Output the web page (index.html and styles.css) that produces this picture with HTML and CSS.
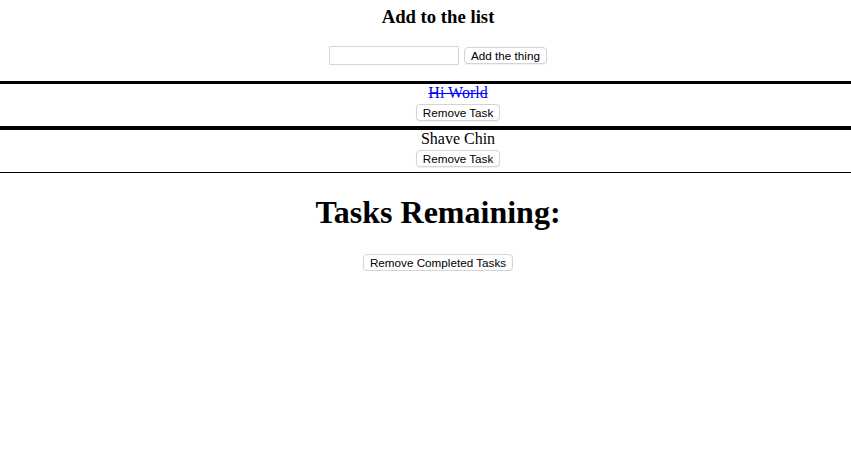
FILE: index.html
```html
<!DOCTYPE html>
<html>
<head>
<meta charset="utf-8">
<title>Todo</title>
<link rel="stylesheet" href="styles.css">
</head>
<body>
<div class="page">
  <h3 class="title">Add to the list</h3>
  <form class="add-form">
    <input class="add-input" type="text">
    <button class="btn" type="button">Add the thing</button>
  </form>
  <ul class="tasks">
    <li class="task">
      <div class="task-text done">Hi World</div>
      <button class="btn" type="button">Remove Task</button>
    </li>
    <li class="task">
      <div class="task-text">Shave Chin</div>
      <button class="btn" type="button">Remove Task</button>
    </li>
  </ul>
  <h1 class="remaining">Tasks Remaining:</h1>
  <div class="actions">
    <button class="btn" type="button">Remove Completed Tasks</button>
  </div>
</div>
</body>
</html>
```
FILE: styles.css
```css
html, body {
  margin: 0;
  padding: 0;
  background: #fff;
  overflow: hidden;
}
body {
  font-family: "Liberation Serif", "Times New Roman", serif;
  color: #000;
  text-align: center;
}
.page {
  width: 876px;
}
.title {
  margin: 6px 0 0;
  font-size: 18.72px;
  line-height: 22px;
  font-weight: bold;
}
.add-form {
  margin: 18px 0 0;
  display: flex;
  justify-content: center;
  align-items: center;
  gap: 5px;
  height: 19px;
}
.add-input {
  box-sizing: border-box;
  width: 130px;
  height: 19px;
  margin: 0;
  border: 1px solid #d6d6d6;
  border-radius: 1px;
  padding: 0 2px;
  background: #fff;
}
.btn {
  box-sizing: border-box;
  height: 17px;
  margin: 0;
  padding: 0 6px;
  font-family: "Liberation Sans", Arial, sans-serif;
  font-size: 11.7px;
  line-height: 15px;
  color: #000;
  background: #fff;
  border: 1px solid #d4d4d4;
  border-radius: 4px;
  box-shadow: 0 1px 1px rgba(0,0,0,0.06);
}
.tasks {
  list-style: none;
  margin: 16px 0 0;
  padding: 0;
}
.task {
  border-top: 3px solid #000;
  border-bottom: 1px solid #000;
  height: 42px;
  padding-left: 40px;
  display: flex;
  flex-direction: column;
  align-items: center;
}
.task-text {
  font-size: 16px;
  line-height: 18px;
  height: 18px;
}
.task-text.done {
  color: #0000ff;
  text-decoration: line-through;
}
.task .btn {
  margin-top: 2px;
}
.remaining {
  margin: 21px 0 0;
  font-size: 32px;
  line-height: 37px;
  font-weight: bold;
}
.actions {
  margin-top: 23px;
  display: flex;
  justify-content: center;
}
```
